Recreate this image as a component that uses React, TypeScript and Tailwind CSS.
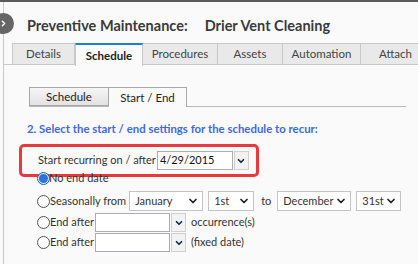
import { ChevronDown } from 'lucide-react'

const font = { fontFamily: 'Lato, "Noto Sans", sans-serif' }

const tabs = [
  { label: 'Details', w: 'w-[63px]' },
  { label: 'Schedule', w: 'w-[68px]', active: true },
  { label: 'Procedures', w: 'w-[75px]' },
  { label: 'Assets', w: 'w-[65px]' },
  { label: 'Automation', w: 'w-[78px]' },
  { label: 'Attach', w: 'w-[70px]' },
]

const Radio = ({ checked }: { checked?: boolean }) =>
  checked ? (
    <span className="w-[13px] h-[13px] rounded-full border border-[#1f5fbf] bg-[#dbe9fb] flex items-center justify-center shrink-0">
      <span className="w-[9px] h-[9px] rounded-full bg-[#2a74d8]" />
    </span>
  ) : (
    <span className="w-[13px] h-[13px] rounded-full border border-[#555] bg-white shrink-0" />
  )

const Select = ({ value, w }: { value: string; w: string }) => (
  <div className={`${w} h-[20px] border border-[#c4c4c4] bg-white flex items-center justify-between pl-[5px] pr-[3px] text-[#333]`}>
    <span>{value}</span>
    <ChevronDown size={12} strokeWidth={3.5} className="text-[#222]" />
  </div>
)

const Combo = ({ value, w }: { value: string; w: string }) => (
  <div className="flex items-center gap-[1px]">
    <div className={`${w} h-[19px] border border-[#abadb3] bg-white pl-[2px] flex items-center text-[#111]`}>{value}</div>
    <div className="w-[15px] h-[19px] border border-[#d0d0d0] bg-[#f2f2f2] flex items-center justify-center">
      <ChevronDown size={10} strokeWidth={4} className="text-[#1a2a44]" />
    </div>
  </div>
)

export default function App() {
  return (
    <div className="w-[418px] h-[264px] bg-[#fafafa] overflow-hidden relative border-t-2 border-[#5a5a5a] text-[11px] text-[#333] whitespace-nowrap" style={font}>
      {/* side toggle */}
      <div className="absolute left-[-7px] top-[11px] w-[21px] h-[21px] rounded-full bg-[#666] flex items-center justify-end pr-[6px] z-10">
        <ChevronDown size={9} strokeWidth={4} className="text-white -rotate-90" />
      </div>

      <div className="ml-[3px] h-full border-l border-[#c9c9c9] flex flex-col">
        <div className="h-[41px] pl-[23px] pt-[13px] text-[14.5px] font-bold text-[#3a3a3a] flex">
          <span>Preventive Maintenance:</span>
          <span className="ml-[17px]">Drier Vent Cleaning</span>
        </div>

        <div className="flex pl-[8px] h-[22px] border-b border-[#c8c8c8] text-[11.5px]">
          {tabs.map((t) => (
            <div
              key={t.label}
              className={`${t.w} shrink-0 flex items-center justify-center border-r border-[#c8c8c8] first:border-l ${
                t.active
                  ? 'bg-[#fafafa] border-t-2 border-t-[#1c7fd6] font-bold text-[#222] h-[23px] border-l border-l-[#c8c8c8]'
                  : 'bg-[#e9e9e9] border-t border-t-[#c8c8c8] text-[#444]'
              }`}
            >
              {t.label}
            </div>
          ))}
        </div>

        <div className="flex-1 pl-[25px] pt-[22px]">
          <div className="flex items-end w-[377px] border-b border-[#b8b8b8] h-[20px] text-[11.5px]">
            <div className="w-[80px] h-[19px] border border-[#a8a8a8] bg-gradient-to-b from-[#f6f6f6] to-[#e2e2e2] flex items-center justify-center text-[#222]">
              Schedule
            </div>
            <div className="w-[78px] h-[20px] border border-b-0 border-l-0 border-[#a8a8a8] bg-[#fafafa] flex items-center justify-center text-[#222] mb-[-1px]">
              Start / End
            </div>
          </div>

          <div className="mt-[13px] ml-[-2px] text-[11.4px] font-bold text-[#4169dd]">
            2. Select the start / end settings for the schedule to recur:
          </div>

          <div className="mt-[7px] ml-[-10px] w-[240px] h-[33px] border-[3px] border-[#e8393c] rounded-[5px] flex items-center pl-[16px]">
            <span>Start recurring on / after</span>
            <div className="ml-[1px]">
              <Combo value="4/29/2015" w="w-[76px]" />
            </div>
          </div>

          <div className="flex flex-col ml-[8px] mt-[-5px] gap-[1px]">
            <div className="flex items-center h-[13px]">
              <Radio checked />
              <span className="ml-[-1px]">No end date</span>
            </div>
            <div className="flex items-center h-[22px] mt-[4px]">
              <Radio />
              <span>Seasonally from</span>
              <div className="ml-[3px]"><Select value="January" w="w-[74px]" /></div>
              <div className="ml-[5px]"><Select value="1st" w="w-[46px]" /></div>
              <span className="ml-[7px] mr-[6px]">to</span>
              <Select value="December" w="w-[74px]" />
              <div className="ml-[5px]"><Select value="31st" w="w-[45px]" /></div>
            </div>
            <div className="flex items-center h-[19px]">
              <Radio />
              <span className="mr-[1px]">End after</span>
              <Combo value="" w="w-[75px]" />
              <span className="ml-[5px]">occurrence(s)</span>
            </div>
            <div className="flex items-center h-[19px]">
              <Radio />
              <span className="mr-[1px]">End after</span>
              <Combo value="" w="w-[75px]" />
              <span className="ml-[5px]">(fixed date)</span>
            </div>
          </div>
        </div>
      </div>
    </div>
  )
}
